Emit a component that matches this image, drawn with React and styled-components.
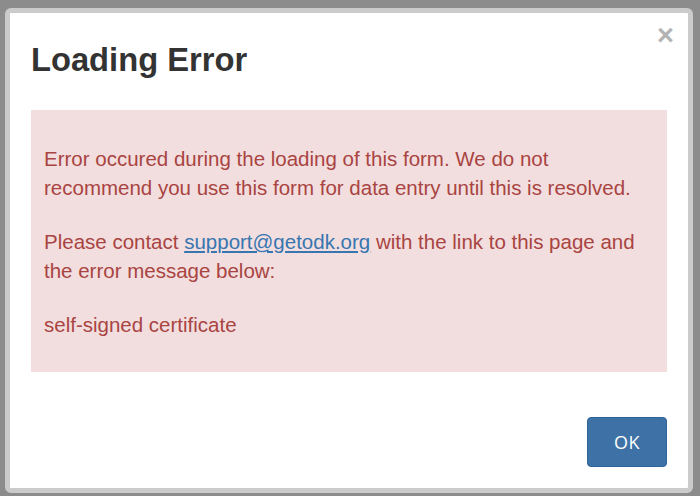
import React from "react";
import styled, { createGlobalStyle } from "styled-components";

const GlobalStyle = createGlobalStyle`
  html, body {
    margin: 0;
    padding: 0;
    background: #8c8c8c;
  }
  body {
    font-family: "Liberation Sans", Arial, sans-serif;
  }
`;

const Backdrop = styled.div`
  width: 700px;
  height: 496px;
  box-sizing: border-box;
  padding: 8px 7px 3px 5px;
`;

const Modal = styled.div`
  position: relative;
  box-sizing: border-box;
  width: 688px;
  height: 485px;
  background: #ffffff;
  border: 5px solid #cbcbcb;
  border-radius: 6px;
  display: flex;
  flex-direction: column;
`;

const Header = styled.div`
  padding: 29px 21px 0;
`;

const Title = styled.h3`
  margin: 0;
  font-size: 32.7px;
  line-height: 36px;
  font-weight: bold;
  color: #333333;
`;

const Close = styled.button`
  position: absolute;
  top: 8px;
  right: 14px;
  padding: 0;
  border: 0;
  background: transparent;
  font-family: "Liberation Sans", Arial, sans-serif;
  font-size: 29px;
  font-weight: bold;
  line-height: 29px;
  color: #b3b3b3;
  cursor: pointer;
`;

const Body = styled.div`
  padding: 32px 21px 0;
`;

const Alert = styled.div`
  background: #f2dede;
  color: #a94442;
  padding: 34px 13px 33px;
  font-size: 20.5px;
  line-height: 29px;
`;

const Paragraph = styled.p`
  margin: 0;
  & + & {
    margin-top: 25px;
  }
`;

const Link = styled.a`
  color: #3776b1;
  text-decoration: underline;
`;

const Footer = styled.div`
  display: flex;
  justify-content: flex-end;
  padding: 45px 21px 0;
`;

const Button = styled.button`
  box-sizing: border-box;
  width: 80px;
  height: 50px;
  background: #3e72a6;
  border: 1px solid #2f6497;
  border-radius: 4px;
  color: #ffffff;
  font-family: "Open Sans", "DejaVu Sans", sans-serif;
  font-size: 18px;
  letter-spacing: 0.5px;
  cursor: pointer;
`;

export default function App() {
  return (
    <>
      <GlobalStyle />
      <Backdrop>
        <Modal>
          <Close aria-label="Close">×</Close>
          <Header>
            <Title>Loading Error</Title>
          </Header>
          <Body>
            <Alert>
              <Paragraph>
                Error occured during the loading of this form. We do not
                recommend you use this form for data entry until this is
                resolved.
              </Paragraph>
              <Paragraph>
                Please contact <Link href="#">support@getodk.org</Link> with
                the link to this page and the error message below:
              </Paragraph>
              <Paragraph>self-signed certificate</Paragraph>
            </Alert>
          </Body>
          <Footer>
            <Button>OK</Button>
          </Footer>
        </Modal>
      </Backdrop>
    </>
  );
}
